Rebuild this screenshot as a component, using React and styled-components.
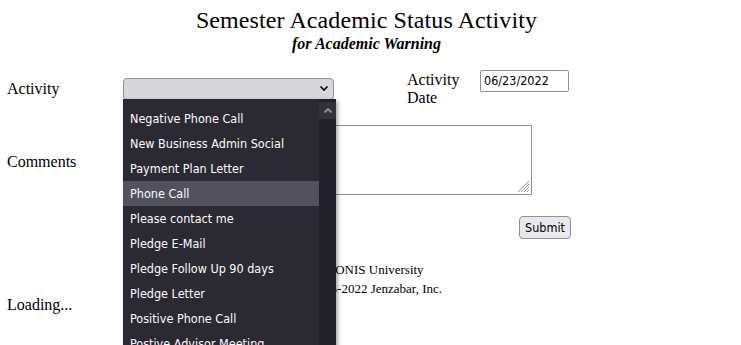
import React from 'react';
import styled, { createGlobalStyle } from 'styled-components';

const Global = createGlobalStyle`
  html, body { margin: 0; padding: 0; background: #fff; }
  body {
    font-family: "Liberation Serif", "Times New Roman", serif;
    font-size: 16px;
    color: #000;
    overflow: hidden;
    height: 345px;
  }
`;

const Page = styled.div`
  position: relative;
  padding: 6px 8px 0 7px;
`;

const Header = styled.div`
  text-align: center;
  padding-right: 7px;
`;

const Title = styled.h1`
  margin: 0;
  font-size: 24px;
  font-weight: normal;
  line-height: 28px;
  letter-spacing: 0.1px;
`;

const Subtitle = styled.div`
  font-size: 16px;
  font-weight: bold;
  font-style: italic;
  line-height: 19px;
`;

const Form = styled.div`
  display: grid;
  grid-template-columns: 116px 284px 73px 90px;
  grid-template-rows: 36px 70px 23px;
  row-gap: 19px;
  margin-top: 17px;
`;

const Label = styled.div`
  align-self: center;
  line-height: 18px;
  padding-top: ${p => p.$nudge || 0}px;
`;

const SelectBox = styled.div`
  align-self: center;
  box-sizing: border-box;
  width: 211px;
  height: 22px;
  margin-top: 1px;
  background: #d7d7db;
  border: 1px solid #8f8f9d;
  border-radius: 4px;
  display: flex;
  align-items: center;
  justify-content: flex-end;
  padding-right: 4px;
`;

const DateInput = styled.div`
  align-self: start;
  box-sizing: border-box;
  width: 89px;
  height: 22px;
  border: 1px solid #8f8f9d;
  border-radius: 2px;
  font-family: "DejaVu Sans Condensed", "DejaVu Sans", Verdana, sans-serif;
  font-size: 12.5px;
  line-height: 20px;
  padding-left: 3px;
`;

const TextArea = styled.div`
  grid-column: 2 / 4;
  grid-row: 2;
  position: relative;
  box-sizing: border-box;
  width: 409px;
  height: 70px;
  border: 1px solid #8f8f9d;
`;

const Grip = styled.svg`
  position: absolute;
  right: 1px;
  bottom: 1px;
`;

const ButtonCell = styled.div`
  grid-column: 4;
  grid-row: 3;
  display: flex;
  justify-content: flex-end;
  margin-top: 2px;
`;

const Button = styled.div`
  box-sizing: border-box;
  height: 23px;
  padding: 0 5px;
  margin-right: -1px;
  background: #e9e9ed;
  border: 1px solid #8f8f9d;
  border-radius: 4px;
  font-family: "DejaVu Sans Condensed", "DejaVu Sans", Verdana, sans-serif;
  font-size: 12.5px;
  line-height: 21px;
`;

const Footer = styled.div`
  margin-top: 23px;
  text-align: center;
  font-size: 13px;
  line-height: 19px;
`;

const Loading = styled.div`
  margin-top: -2px;
  line-height: 18px;
`;

const List = styled.div`
  position: absolute;
  left: 123px;
  top: 99px;
  width: 213px;
  height: 260px;
  background: #2b2a33;
  box-shadow: 2px 2px 4px rgba(0, 0, 0, 0.35);
  display: flex;
`;

const Options = styled.div`
  flex: 1;
  padding-top: 7px;
  overflow: hidden;
`;

const Option = styled.div`
  height: 25px;
  padding-left: 7px;
  color: #fbfbfe;
  background: ${p => (p.$active ? '#52525e' : 'transparent')};
  font-family: "DejaVu Sans Condensed", "DejaVu Sans", Verdana, sans-serif;
  font-size: 12.5px;
  line-height: 25px;
  white-space: nowrap;
`;

const Scroll = styled.div`
  width: 17px;
  background: #232229;
`;

const ScrollButton = styled.div`
  height: 17px;
  margin-top: 3px;
  display: flex;
  align-items: center;
  justify-content: center;
  background: #32313a;
`;

const options = [
  'Negative Phone Call',
  'New Business Admin Social',
  'Payment Plan Letter',
  'Phone Call',
  'Please contact me',
  'Pledge E-Mail',
  'Pledge Follow Up 90 days',
  'Pledge Letter',
  'Positive Phone Call',
  'Postive Advisor Meeting',
];

export default function App() {
  return (
    <>
      <Global />
      <Page>
        <Header>
          <Title>Semester Academic Status Activity</Title>
          <Subtitle>for Academic Warning</Subtitle>
        </Header>
        <Form>
          <Label $nudge={2}>Activity</Label>
          <SelectBox>
            <svg width="10" height="7" viewBox="0 0 10 7">
              <path d="M1.5 1.5 L5 5 L8.5 1.5" fill="none" stroke="#000" strokeWidth="1.6" />
            </svg>
          </SelectBox>
          <Label $nudge={2}>Activity<br />Date</Label>
          <DateInput>06/23/2022</DateInput>

          <Label $nudge={4}>Comments</Label>
          <TextArea>
            <Grip width="14" height="14" viewBox="0 0 14 14">
              <path d="M13 2 L2 13 M13 5 L5 13 M13 8 L8 13 M13 11 L11 13" stroke="#8f8f9d" strokeWidth="1" />
            </Grip>
          </TextArea>

          <ButtonCell>
            <Button>Submit</Button>
          </ButtonCell>
        </Form>
        <Footer>
          ADONIS University<br />
          © 2005-2022 Jenzabar, Inc.
        </Footer>
        <Loading>Loading...</Loading>

        <List>
          <Options>
            {options.map((o, i) => (
              <Option key={o} $active={i === 3}>{o}</Option>
            ))}
          </Options>
          <Scroll>
            <ScrollButton>
              <svg width="10" height="7" viewBox="0 0 10 7">
                <path d="M1.5 5.5 L5 2 L8.5 5.5" fill="none" stroke="#8f8f9d" strokeWidth="1.8" />
              </svg>
            </ScrollButton>
          </Scroll>
        </List>
      </Page>
    </>
  );
}
